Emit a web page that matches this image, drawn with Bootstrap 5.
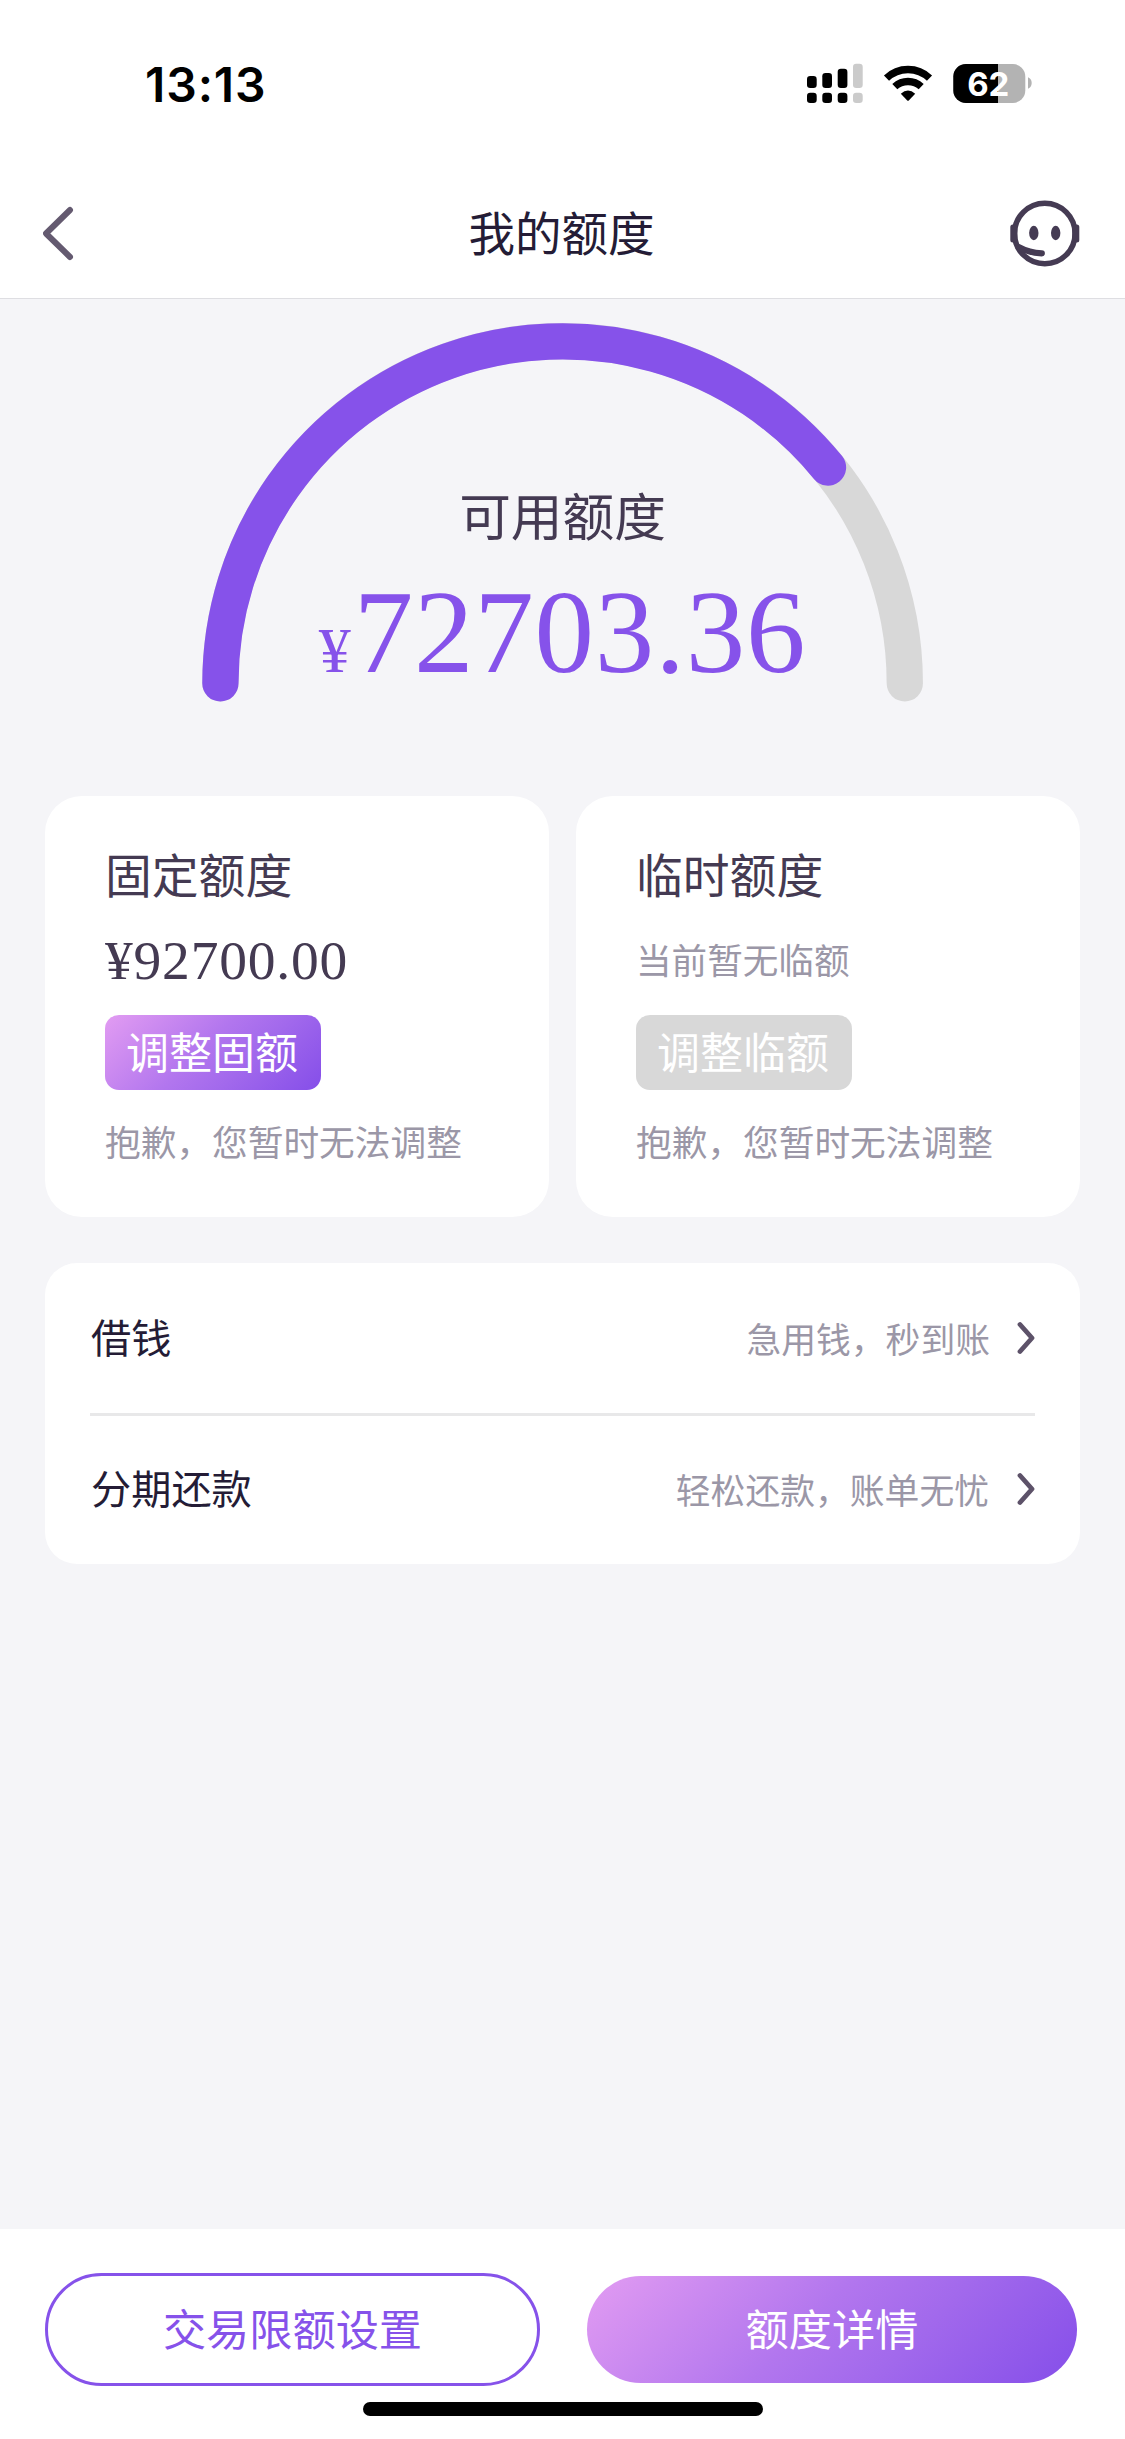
<!DOCTYPE html>
<html lang="zh-CN">
<head>
<meta charset="utf-8">
<meta name="viewport" content="width=device-width, initial-scale=1">
<title>我的额度</title>
<link rel="stylesheet" href="https://cdn.jsdelivr.net/npm/bootstrap@5.3.0/dist/css/bootstrap.min.css">
<style>
  body { font-family: "Noto Sans CJK SC", sans-serif; background: #f5f5f8; color: #443a52; }
  .screen { height: 2439px; }
  .status-bar { height: 168px; padding: 57px 93px 0 145px; }
  .status-bar svg { margin-top: -1px; }
  .clock { font: 600 48px/56px Inter, sans-serif; color: #000; letter-spacing: .9px; }
  .title-bar { height: 131px; padding: 0 45px 0 43px; border-bottom: 1.5px solid #dedee2; }
  .page-title { font-size: 46.5px; line-height: 60px; color: #241c36; margin-bottom: 5px; }
  .gauge { height: 497px; }
  .gauge-text { left: 0; right: 0; top: 180px; }
  .gauge-label { font-size: 51.7px; line-height: 70px; }
  .serif { font-family: "Liberation Serif", serif; }
  .amount { color: #8652ea; font-size: 119px; line-height: 120px; letter-spacing: .8px; margin-top: 23px; }
  .amount-sign { font-size: 64px; letter-spacing: 0; margin-right: 3px; }
  .main-area { padding: 0 45px; }
  .limit-row { gap: 27px; }
  .limit-card { height: 421px; border-radius: 37px; padding: 42px 0 0 60px; }
  .limit-name { font-size: 46.8px; line-height: 70px; }
  .limit-sum { font-size: 55.5px; letter-spacing: .8px; line-height: 66px; height: 64px; margin-top: 20px; margin-bottom: 23px; }
  .hint { font-size: 35.7px; line-height: 54px; color: #9b97a7; }
  .hint-sm { font-size: 35.6px; letter-spacing: 0; line-height: 61px; color: #9b97a7; }
  .btn-adjust { width: 216px; height: 75px; border-radius: 14px; font-size: 43px; line-height: 71px; padding: 0 2px 4px 0; color: #fff; border: 0; margin-bottom: 24px; }
  .grad { background: linear-gradient(135deg, #e29cf2 0%, #b276ee 45%, #a269ec 65%, #854ee9 100%); }
  .btn-off { background: #d8d8d8; }
  .menu-card { margin-top: 46px; border-radius: 32px; padding: 0 45px; height: 301px; }
  .menu-row { height: 150px; }
  .menu-row + .menu-row { border-top: 3px solid #e8e8e9; padding-bottom: 2px; }
  .menu-name { font-size: 40.2px; line-height: 56px; color: #241c36; margin: 0 0 4px 1px; }
  .menu-note { font-size: 34.8px; line-height: 50px; color: #9b97a7; margin-right: 27px; }
  .menu-row + .menu-row .menu-note { margin-right: 28px; }
  .bottom-bar { height: 210px; padding: 44px 48px 0 45px; }
  .btn-foot { border-radius: 57px; font-size: 43.2px; line-height: 1; padding: 0 0 4px; }
  .btn-line { width: 495px; height: 113px; border: 3px solid #8652ea; color: #8652ea; }
  .btn-fill { width: 490px; height: 107px; color: #fff; border: 0; }
  .home-bar { width: 400px; height: 14px; border-radius: 7px; background: #000; margin: 16px 0 0 318px; }
</style>
</head>
<body>
<div class="screen d-flex flex-column">
  <header class="bg-white">
    <div class="status-bar d-flex justify-content-between align-items-start">
      <div class="clock">13:13</div>
      <svg width="226" height="56" viewBox="806 56 226 56">
        <g fill="#000">
          <rect x="807" y="76" width="9.7" height="12" rx="3.2"/><rect x="822.3" y="73" width="9.7" height="15" rx="3.2"/><rect x="837.7" y="68.7" width="9.7" height="19.3" rx="3.2"/>
          <rect x="807" y="92.7" width="9.7" height="10.3" rx="3.2"/><rect x="822.3" y="92.7" width="9.7" height="10.3" rx="3.2"/><rect x="837.7" y="92.7" width="9.7" height="10.3" rx="3.2"/>
        </g>
        <g fill="#cbcbcb"><rect x="853" y="63.7" width="9.7" height="24.3" rx="3.2"/><rect x="853" y="92.7" width="9.7" height="10.3" rx="3.2"/></g>
        <path d="M886.5 78.2A31 31 0 0 1 929.5 78.2M894.8 86.6A19.5 19.5 0 0 1 921.2 86.6" fill="none" stroke="#000" stroke-width="7.4"/>
        <path d="M900.8 93.7Q908 87.3 915.2 93.7L909 100.3Q908 101.3 907 100.3Z" fill="#000"/>
        <clipPath id="charge"><rect x="953" y="56" width="45" height="56"/></clipPath>
        <rect x="953.3" y="64" width="72" height="39" rx="12.5" fill="#b3b3b3"/>
        <rect x="953.3" y="64" width="72" height="39" rx="12.5" fill="#000" clip-path="url(#charge)"/>
        <path d="M1028 77.3Q1031.7 79 1031.7 83T1028 88.7Z" fill="#b3b3b3"/>
        <text x="988.3" y="95.6" text-anchor="middle" font-family="Inter, sans-serif" font-weight="700" font-size="33" fill="#fff">62</text>
      </svg>
    </div>
    <div class="title-bar d-flex justify-content-between align-items-center">
      <svg width="70" height="60" viewBox="0 0 70 60"><path d="M27 7L3 30.5L27 54" fill="none" stroke="#645a70" stroke-width="6" stroke-linecap="round" stroke-linejoin="round"/></svg>
      <div class="page-title">我的额度</div>
      <svg width="70" height="70" viewBox="1009.5 198.5 70 70">
        <circle cx="1044.3" cy="234" r="30.3" fill="none" stroke="#453b53" stroke-width="5.5"/>
        <rect x="1009.8" y="225" width="7" height="18" rx="2.5" fill="#453b53"/><rect x="1071.8" y="225" width="7" height="18" rx="2.5" fill="#453b53"/>
        <ellipse cx="1033.3" cy="233.5" rx="4.7" ry="7.2" fill="#453b53"/><ellipse cx="1055.2" cy="233.5" rx="4.7" ry="7.2" fill="#453b53"/>
        <path d="M1018 247.5Q1029 253.5 1041.3 253.8" fill="none" stroke="#453b53" stroke-width="6.2" stroke-linecap="round"/>
      </svg>
    </div>
  </header>

  <main class="main-area flex-grow-1">
    <section class="gauge position-relative text-center">
      <svg class="d-block mx-auto" width="760" height="420" viewBox="183 299 760 420">
        <g fill="none" stroke-width="36.3" stroke-linecap="round">
          <path d="M220.4 683.3A342.2 342.2 0 0 1 904.8 683.3" stroke="#d8d8d8"/>
          <path d="M220.4 683.3A342.2 342.2 0 0 1 828 467.5" stroke="#8652ea"/>
        </g>
      </svg>
      <div class="gauge-text position-absolute">
        <div class="gauge-label">可用额度</div>
        <div class="amount serif"><span class="amount-sign">¥</span>72703.36</div>
      </div>
    </section>

    <div class="limit-row d-flex">
      <section class="limit-card bg-white flex-fill">
        <div class="limit-name">固定额度</div>
        <div class="limit-sum serif">¥92700.00</div>
        <button class="btn btn-adjust grad d-block">调整固额</button>
        <div class="hint">抱歉，您暂时无法调整</div>
      </section>
      <section class="limit-card bg-white flex-fill">
        <div class="limit-name">临时额度</div>
        <div class="limit-sum"><div class="hint-sm">当前暂无临额</div></div>
        <button class="btn btn-adjust btn-off d-block">调整临额</button>
        <div class="hint">抱歉，您暂时无法调整</div>
      </section>
    </div>

    <section class="menu-card bg-white">
      <div class="menu-row d-flex align-items-center">
        <span class="menu-name me-auto">借钱</span>
        <span class="menu-note">急用钱，秒到账</span>
        <svg width="18" height="34" viewBox="0 0 18 34"><path d="M3 3.5L15 17L3 30.5" fill="none" stroke="#5d5269" stroke-width="4.8" stroke-linecap="round" stroke-linejoin="round"/></svg>
      </div>
      <div class="menu-row d-flex align-items-center">
        <span class="menu-name me-auto">分期还款</span>
        <span class="menu-note">轻松还款，账单无忧</span>
        <svg width="18" height="34" viewBox="0 0 18 34"><path d="M3 3.5L15 17L3 30.5" fill="none" stroke="#5d5269" stroke-width="4.8" stroke-linecap="round" stroke-linejoin="round"/></svg>
      </div>
    </section>
  </main>

  <footer class="bottom-bar bg-white">
    <div class="d-flex justify-content-between align-items-center">
      <button class="btn btn-foot btn-line">交易限额设置</button>
      <button class="btn btn-foot btn-fill grad">额度详情</button>
    </div>
    <div class="home-bar"></div>
  </footer>
</div>
<script src="https://cdn.jsdelivr.net/npm/bootstrap@5.3.0/dist/js/bootstrap.bundle.min.js"></script>
</body>
</html>
